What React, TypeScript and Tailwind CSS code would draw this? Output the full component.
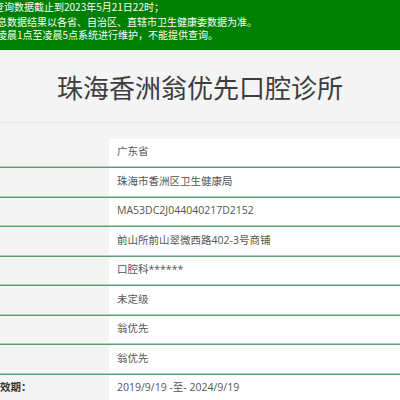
import React from "react";

const rows: { label?: string; value: string }[] = [
  { value: "广东省" },
  { value: "珠海市香洲区卫生健康局" },
  { value: "MA53DC2J044040217D2152" },
  { value: "前山所前山翠微西路402-3号商铺" },
  { value: "口腔科******" },
  { value: "未定级" },
  { value: "翁优先" },
  { value: "翁优先" },
  { label: "有效期：", value: "2019/9/19 -至- 2024/9/19" },
];

export default function App() {
  return (
    <div
      className="w-[400px] h-[400px] overflow-hidden bg-[#f4f4f4]"
      style={{ fontFamily: '"Open Sans", "Noto Sans CJK SC", sans-serif' }}
    >
      <div
        className="h-[50px] bg-[#008000] text-white text-[10px] overflow-hidden whitespace-nowrap"
        style={{ fontFamily: '"Noto Sans CJK SC", sans-serif' }}
      >
        <div className="leading-[13px] ml-[-6px]">查询数据截止到2023年5月21日22时；</div>
        <div className="leading-[13px] ml-[-13px] mt-[2px]">信息数据结果以各省、自治区、直辖市卫生健康委数据为准。</div>
        <div className="leading-[13px] ml-[-3px]">凌晨1点至凌晨5点系统进行维护，不能提供查询。</div>
      </div>
      <div className="h-[72.5px] flex items-center justify-center border-b border-[#e6e6e6]">
        <div
          className="text-[26px] leading-none text-[#3d3d3d] mt-[2px]"
          style={{ fontFamily: '"Noto Sans CJK SC", sans-serif' }}
        >
          珠海香洲翁优先口腔诊所
        </div>
      </div>
      <div className="mt-[16px]">
        {rows.map((r, i) => (
          <div key={i}>
            <div className="flex h-[27.5px]">
              <div className="w-[109px] overflow-hidden whitespace-nowrap flex items-center">
                {r.label && (
                  <span className="ml-[-10.5px] text-[10.5px] font-bold text-[#333]">{r.label}</span>
                )}
              </div>
              <div className="flex-1 bg-white flex items-center pl-[8px] text-[10.5px] text-[#555] whitespace-nowrap">
                {r.value}
              </div>
            </div>
            {i < rows.length - 1 && (
              <div>
                <div className="h-px bg-[#a9d2ba]" />
                <div className="h-px bg-[#5c9d78]" />
              </div>
            )}
          </div>
        ))}
      </div>
    </div>
  );
}
